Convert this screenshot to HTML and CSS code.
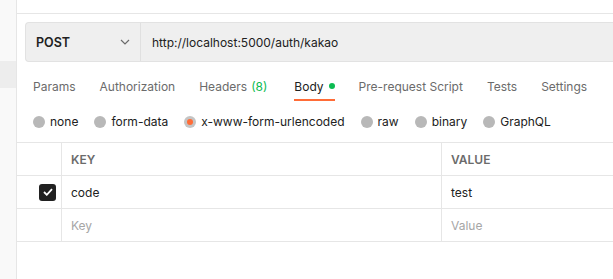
FILE: index.html
```html
<!DOCTYPE html>
<html lang="en">
<head>
    <meta charset="UTF-8">
    <title>Request</title>
    <link rel="stylesheet" href="styles.css">
</head>
<body>
    <div class="app">
        <div class="sidebar">
            <div class="sidebar-item"></div>
        </div>
        <div class="main">
            <div class="topbar"></div>
            <div class="request">
                <div class="urlbar">
                    <div class="method">
                        <span>POST</span>
                        <svg class="chevron" width="10" height="6" viewBox="0 0 10 6"><path d="M1 1l4 4 4-4" fill="none" stroke="#6b6b6b" stroke-width="1.2"/></svg>
                    </div>
                    <div class="url">http://localhost:5000/auth/kakao</div>
                </div>
                <div class="tabs">
                    <div class="tab">Params</div>
                    <div class="tab">Authorization</div>
                    <div class="tab">Headers <span class="count">(8)</span></div>
                    <div class="tab active">Body <span class="dot"></span></div>
                    <div class="tab">Pre-request Script</div>
                    <div class="tab">Tests</div>
                    <div class="tab">Settings</div>
                </div>
                <div class="radios">
                    <label class="radio"><span class="circle"></span>none</label>
                    <label class="radio"><span class="circle"></span>form-data</label>
                    <label class="radio"><span class="circle checked"></span>x-www-form-urlencoded</label>
                    <label class="radio"><span class="circle"></span>raw</label>
                    <label class="radio"><span class="circle"></span>binary</label>
                    <label class="radio"><span class="circle"></span>GraphQL</label>
                </div>
            </div>
            <div class="params">
                <div class="row head">
                    <div class="cell check"></div>
                    <div class="cell key">KEY</div>
                    <div class="cell value">VALUE</div>
                </div>
                <div class="row">
                    <div class="cell check">
                        <span class="box">
                            <svg width="10" height="8" viewBox="0 0 10 8"><path d="M1 4l2.8 2.8L9 1.2" fill="none" stroke="#fff" stroke-width="1.8"/></svg>
                        </span>
                    </div>
                    <div class="cell key">code</div>
                    <div class="cell value">test</div>
                </div>
                <div class="row">
                    <div class="cell check"></div>
                    <div class="cell key empty">Key</div>
                    <div class="cell value empty">Value</div>
                </div>
            </div>
        </div>
    </div>
</body>
</html>
```

FILE: styles.css
```css
body {
    margin: 0;
    font-family: Inter, "Noto Sans", sans-serif;
    font-size: 12px;
    color: #212121;
    background: #fff;
}

.app {
    display: flex;
    height: 279px;
}

.sidebar {
    width: 16px;
    background: #f9f9f9;
    border-right: 1px solid #e6e6e6;
    padding-top: 61px;
}

.sidebar-item {
    height: 27px;
    background: #ededed;
}

.main {
    flex: 1;
    min-width: 0;
}

.topbar {
    height: 13px;
    border-bottom: 1px solid #e6e6e6;
}

.request {
    padding: 8px 0 0 8px;
}

/* url bar */
.urlbar {
    display: flex;
    height: 38px;
    background: #efefef;
    border: 1px solid #e2e2e2;
    border-right: none;
    border-radius: 4px 0 0 4px;
}

.method {
    width: 115px;
    display: flex;
    align-items: center;
    justify-content: space-between;
    padding: 0 10px 0 10px;
    box-sizing: border-box;
    border-right: 1px solid #e0e0e0;
    font-weight: 600;
    font-size: 12.5px;
}

.url {
    display: flex;
    align-items: center;
    padding-left: 11px;
    white-space: nowrap;
}

/* tabs */
.tabs {
    display: flex;
    gap: 24px;
    padding-left: 8px;
    height: 39px;
    white-space: nowrap;
}

.tab {
    color: #6b6b6b;
    display: flex;
    align-items: center;
    gap: 5px;
    border-bottom: 2px solid transparent;
    box-sizing: border-box;
    padding-top: 11px;
}

.tab.active {
    color: #212121;
    border-bottom-color: #ff6c37;
    margin-left: 3px;
}

.count {
    color: #0cbb52;
    margin-left: -1px;
}

.dot {
    width: 6px;
    height: 6px;
    border-radius: 50%;
    background: #0cbb52;
}

/* body type radios */
.radios {
    display: flex;
    gap: 16px;
    padding-left: 8px;
    height: 41px;
    align-items: center;
    white-space: nowrap;
}

.radio {
    display: flex;
    align-items: center;
    gap: 5px;
}

.circle {
    width: 12px;
    height: 12px;
    border-radius: 50%;
    background: #b8b8b8;
    position: relative;
}

.circle.checked {
    background: #c4c4c4;
}

.circle.checked::after {
    content: "";
    position: absolute;
    left: 3px;
    top: 3px;
    width: 6px;
    height: 6px;
    border-radius: 50%;
    background: #ff6c37;
}

/* params table */
.params {
    border-top: 1px solid #e6e6e6;
}

.row {
    display: flex;
    height: 33px;
    border-bottom: 1px solid #e6e6e6;
    box-sizing: border-box;
}

.cell {
    display: flex;
    align-items: center;
    padding-left: 9px;
    box-sizing: border-box;
    white-space: nowrap;
}

.cell.check {
    width: 45px;
    padding: 0 5px 0 0;
    justify-content: flex-end;
    border-right: 1px solid #e6e6e6;
}

.cell.key {
    width: 380px;
    border-right: 1px solid #e6e6e6;
}

.cell.value {
    flex: 1;
}

.head .cell {
    color: #6b6b6b;
    font-size: 12px;
    font-weight: 600;
}

.empty {
    color: #a6a6a6;
}

.box {
    width: 17px;
    height: 17px;
    border-radius: 3px;
    background: #212121;
    display: flex;
    align-items: center;
    justify-content: center;
}
```
